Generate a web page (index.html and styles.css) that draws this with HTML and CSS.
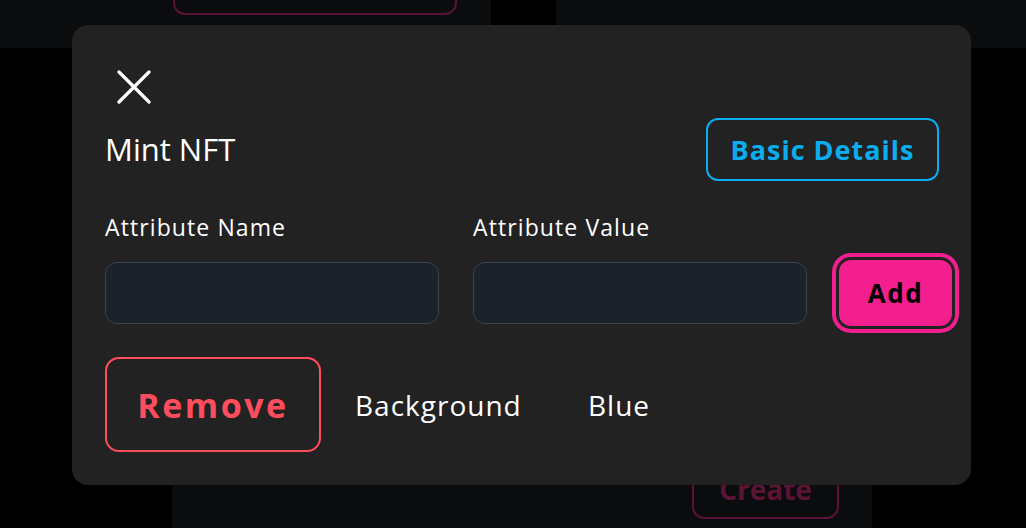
FILE: index.html
```html
<!DOCTYPE html>
<html lang="en">
<head>
    <meta charset="UTF-8">
    <meta name="viewport" content="width=device-width, initial-scale=1.0">
    <title>Mint NFT</title>
    <link rel="stylesheet" href="styles.css">
</head>
<body>
    <!-- page behind the overlay -->
    <div class="page">
        <div class="top-row">
            <div class="card card-left"><button class="ghost-btn top-btn"></button></div>
            <div class="card card-right"></div>
        </div>
        <div class="card card-main">
            <button class="ghost-btn create-btn">Create</button>
        </div>
    </div>

    <!-- modal -->
    <div class="modal">
        <button class="close-btn" aria-label="Close">
            <svg width="34" height="34" viewBox="0 0 34 34" fill="none" stroke="#fff" stroke-width="3.2" stroke-linecap="round">
                <path d="M2 2 L32 32 M32 2 L2 32"/>
            </svg>
        </button>

        <div class="modal-head">
            <h2 class="modal-title">Mint NFT</h2>
            <button class="details-btn">Basic Details</button>
        </div>

        <div class="fields">
            <div class="field">
                <label for="attr-name">Attribute Name</label>
                <input type="text" id="attr-name">
            </div>
            <div class="field">
                <label for="attr-value">Attribute Value</label>
                <input type="text" id="attr-value">
            </div>
            <button class="add-btn">Add</button>
        </div>

        <div class="attr-row">
            <button class="remove-btn">Remove</button>
            <span class="attr-cell attr-name">Background</span>
            <span class="attr-cell">Blue</span>
        </div>
    </div>
</body>
</html>
```

FILE: styles.css
```css
body{
    margin: 0;
    background-color: #000;
    height: 528px;
    overflow: hidden;
    position: relative;
    font-family: "Open Sans", "Liberation Sans", sans-serif;
    color: #fff;
}
button{
    font-family: inherit;
    cursor: pointer;
}

/* background page */
.top-row{
    display: grid;
    grid-template-columns: 491px 470px;
    grid-template-rows: 48px;
    column-gap: 65px;
}
.card{
    background-color: #0b0c0e;
}
.card-left{
    padding-left: 173px;
    border-radius: 0 0 10px 0;
}
.card-right{
    border-radius: 0 0 0 10px;
}
.ghost-btn{
    background: transparent;
    border: 2px solid #5c1236;
    border-radius: 12px;
    color: #5c1434;
}
.top-btn{
    display: block;
    width: 284px;
    height: 50px;
    margin-top: -35px;
}
.card-main{
    margin: 20px 0 0 172px;
    width: 700px;
    height: 460px;
    box-sizing: border-box;
    display: flex;
    justify-content: flex-end;
    align-items: flex-end;
    padding: 0 33px 9px 0;
    border-radius: 12px 12px 0 0;
}
.create-btn{
    width: 147px;
    height: 60px;
    font-size: 28px;
    font-weight: 700;
}

/* modal */
.modal{
    position: absolute;
    left: 72px;
    top: 25px;
    width: 899px;
    height: 460px;
    box-sizing: border-box;
    padding: 45px 32px 0 33px;
    background-color: #222222;
    border-radius: 16px;
}
.close-btn{
    display: block;
    margin-left: 12px;
    padding: 0;
    border: none;
    background: none;
    width: 34px;
    height: 34px;
}
.close-btn svg{
    display: block;
}
.modal-head{
    display: flex;
    justify-content: space-between;
    align-items: center;
    margin-top: 14px;
    height: 62px;
}
.modal-title{
    margin: 0;
    font-size: 31px;
    font-weight: 400;
}
.details-btn{
    width: 233px;
    height: 63px;
    background: transparent;
    border: 2px solid #0aaef0;
    border-radius: 12px;
    color: #0aaef0;
    font-size: 27px;
    font-weight: 700;
    letter-spacing: 1px;
}

.fields{
    display: flex;
    align-items: flex-end;
    margin-top: 32px;
}
.field{
    display: flex;
    flex-direction: column;
    gap: 20px;
    margin-right: 34px;
}
.field + .field{
    margin-right: 32px;
}
.field label{
    font-size: 23px;
    line-height: 30px;
    letter-spacing: 1.1px;
}
.field input{
    width: 334px;
    height: 62px;
    box-sizing: border-box;
    background-color: #1d222a;
    border: 1.5px solid #3a424d;
    border-radius: 12px;
    outline: none;
    color: #fff;
}
.add-btn{
    flex-shrink: 0;
    width: 113px;
    height: 66px;
    margin-bottom: -2px;
    background-color: #f41f8f;
    border: none;
    border-radius: 12px;
    box-shadow: 0 0 0 3px #222, 0 0 0 7px #f41f8f;
    color: #000;
    font-size: 26px;
    font-weight: 700;
    letter-spacing: 1.5px;
}

.attr-row{
    display: flex;
    align-items: center;
    margin-top: 33px;
}
.remove-btn{
    width: 216px;
    height: 95px;
    background: transparent;
    border: 2px solid #ff4d5e;
    border-radius: 14px;
    color: #ff4d5e;
    font-size: 34px;
    font-weight: 700;
    letter-spacing: 2.5px;
}
.attr-cell{
    font-size: 28px;
    letter-spacing: 1px;
}
.attr-name{
    width: 233px;
    margin-left: 34px;
}
```
